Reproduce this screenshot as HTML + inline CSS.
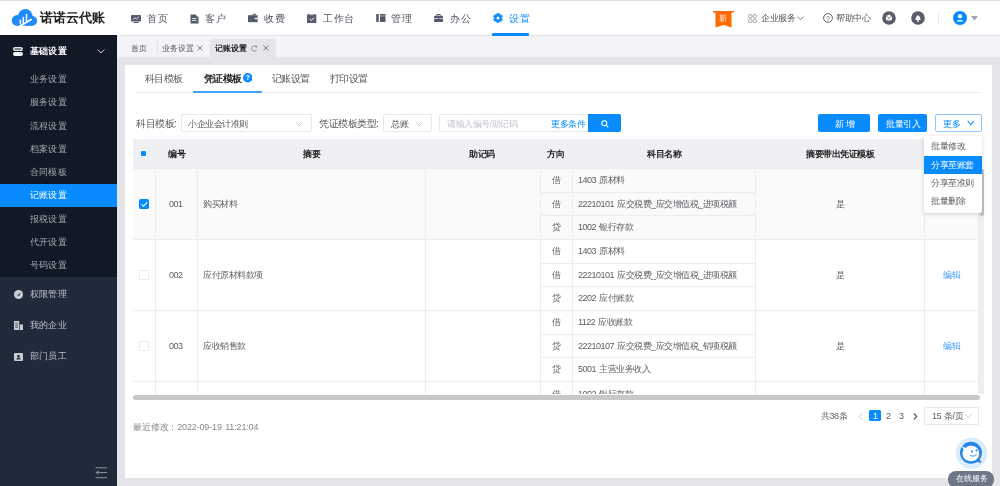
<!DOCTYPE html>
<html><head><meta charset="utf-8"><style>
*{box-sizing:border-box;margin:0;padding:0}
html,body{width:1000px;height:486px;overflow:hidden}
body{position:relative;background:#e4e5e9;font-family:"Liberation Sans",sans-serif;color:#333}
.a{position:absolute}
.t{position:absolute;will-change:transform;white-space:nowrap;line-height:20px;font-size:9px;letter-spacing:-0.5px;word-spacing:1px;color:#5f6166}
.nav{font-size:10px;letter-spacing:0.6px;color:#50545e}
.side{font-size:9px;letter-spacing:0.2px;color:#a4a8b0}
.tb{font-size:8px;letter-spacing:0;color:#555}
.ct{font-size:10px;letter-spacing:-0.7px;color:#555}
.lbl{font-size:10px;letter-spacing:-0.5px;color:#555}
.hd{font-weight:bold;color:#222}
.d{font-size:10px;letter-spacing:-0.9px}
.sel{position:absolute;border:1px solid #e6e8ec;border-radius:2px;background:#fff}
</style></head><body>
<div class="a" style="left:0px;top:0px;width:1000.00px;height:36.00px;background:#fff;border-top:1px solid #dedfe3;border-bottom:1px solid #e3e4e8"></div>
<svg class="a" style="left:11px;top:8px;" width="27" height="19" viewBox="0 0 27 19"><g fill="#1f8bfb"><circle cx="6.2" cy="12.4" r="5.4"/><circle cx="14.3" cy="8.4" r="7.3"/><circle cx="21.2" cy="12.9" r="4.9"/><rect x="6" y="12" width="15.5" height="5.8"/></g><g stroke="#fff" stroke-linecap="round" fill="none"><path d="M9.4 12.3 V15.8" stroke-width="1.5"/><path d="M12.3 9.6 V15.6" stroke-width="1.5"/><path d="M15.5 6.5 V12.8" stroke-width="1.5"/><path d="M8.2 18.6 L20.2 11.6" stroke-width="1.7"/></g></svg>
<div class="t " style="left:40px;top:7.50px;font-size:13px;letter-spacing:0;font-weight:bold;color:#222">诺诺云代账</div>
<svg class="a" style="left:130.5px;top:14.5px;" width="10" height="8" viewBox="0 0 10 8"><rect x="0" y="0" width="10" height="6.5" rx="0.8" fill="#555b6b"/><path d="M2 4.5 L4 2.8 L5.5 4 L8 1.8" stroke="#fff" stroke-width="0.8" fill="none"/><rect x="2.5" y="7" width="5" height="1" fill="#555b6b"/></svg>
<div class="t nav" style="left:147px;top:8.60px;">首页</div>
<svg class="a" style="left:190px;top:13.5px;" width="9" height="10" viewBox="0 0 9 10"><path d="M0.5 0.5 H5.5 L8.5 3.5 V9.5 H0.5 Z" fill="#555b6b"/><path d="M2 4.5 H6.5 M2 6.5 H6.5" stroke="#fff" stroke-width="0.8"/></svg>
<div class="t nav" style="left:205px;top:8.60px;">客户</div>
<svg class="a" style="left:248px;top:13.3px;" width="10" height="10" viewBox="0 0 10 10"><path d="M0 2.2 H9.6 V9.2 H0 Z" fill="#555b6b"/><path d="M3.6 2.2 L7 0.2 L8 2.2 Z" fill="#555b6b"/><rect x="6.6" y="4.9" width="3" height="1.3" fill="#fff"/></svg>
<div class="t nav" style="left:263.6px;top:8.60px;">收费</div>
<svg class="a" style="left:306.8px;top:13.8px;" width="10" height="10" viewBox="0 0 10 10"><rect x="0" y="0.3" width="9.3" height="8.8" rx="0.9" fill="#555b6b"/><rect x="2.6" y="0" width="4.1" height="1.4" fill="#a9adb8"/><path d="M2.6 4.8 L4.3 6.5 L7 3.6" stroke="#fff" stroke-width="1" fill="none"/></svg>
<div class="t nav" style="left:322.5px;top:8.60px;">工作台</div>
<svg class="a" style="left:375.5px;top:14px;" width="10" height="8" viewBox="0 0 10 8"><rect x="0.2" y="0" width="2.5" height="8" fill="#555b6b"/><rect x="4" y="0" width="5.5" height="8" fill="#555b6b"/><rect x="4" y="1.6" width="5.5" height="0.7" fill="#c5c8d0"/></svg>
<div class="t nav" style="left:391px;top:8.60px;">管理</div>
<svg class="a" style="left:434.3px;top:14.2px;" width="9" height="8" viewBox="0 0 9 8"><rect x="0" y="1.8" width="9" height="6.2" rx="0.8" fill="#555b6b"/><path d="M2.8 1.9 V0.5 H6.2 V1.9" stroke="#555b6b" stroke-width="1" fill="none"/><rect x="0" y="4.3" width="9" height="0.7" fill="#fff"/><rect x="3.8" y="3.8" width="1.4" height="1.6" fill="#555b6b"/></svg>
<div class="t nav" style="left:449.5px;top:8.60px;">办公</div>
<svg class="a" style="left:492.8px;top:12.9px;" width="10" height="10" viewBox="0 0 10 10"><path d="M3.70 0.48 L6.30 0.48 L6.60 2.23 L8.26 1.62 L9.56 3.86 L8.20 5.00 L9.56 6.14 L8.26 8.38 L6.60 7.77 L6.30 9.52 L3.70 9.52 L3.40 7.77 L1.74 8.38 L0.44 6.14 L1.80 5.00 L0.44 3.86 L1.74 1.62 L3.40 2.23 Z" fill="#078bff" stroke="#078bff" stroke-width="0.5" stroke-linejoin="round"/><circle cx="5" cy="5" r="1.5" fill="#fff"/></svg>
<div class="t nav" style="left:509px;top:8.60px;color:#078bff">设置</div>
<div class="a" style="left:492px;top:33.4px;width:37.30px;height:2.60px;background:#078bff;border-radius:1px"></div>
<svg class="a" style="left:713px;top:10.5px;" width="21" height="17" viewBox="0 0 21 17"><rect x="0" y="0" width="21" height="1.5" fill="#ff6a00"/><path d="M2.5 0 H18.5 V16.5 L10.5 14 L2.5 16.5 Z" fill="#ff6a00"/></svg>
<div class="t " style="left:719px;top:8.50px;font-size:8px;letter-spacing:0;color:#fff">新</div>
<svg class="a" style="left:748px;top:14px;" width="9" height="9" viewBox="0 0 9 9"><g fill="none" stroke="#8a8e9a" stroke-width="0.8"><circle cx="2.2" cy="2.2" r="1.8"/><circle cx="6.8" cy="2.2" r="1.8"/><circle cx="2.2" cy="6.8" r="1.8"/><circle cx="6.8" cy="6.8" r="1.8"/></g></svg>
<div class="t " style="left:760.7px;top:7.80px;color:#555">企业服务</div>
<svg class="a" style="left:797px;top:16px;" width="7" height="5" viewBox="0 0 7 5"><path d="M0.5 0.5 L3.5 3.8 L6.5 0.5" stroke="#777" stroke-width="0.9" fill="none"/></svg>
<svg class="a" style="left:822.6px;top:12.9px;" width="10" height="10" viewBox="0 0 10 10"><circle cx="5" cy="5" r="4.4" stroke="#555" stroke-width="0.9" fill="none"/><text x="5" y="7.6" font-size="7" text-anchor="middle" fill="#555" font-family="Liberation Sans">?</text></svg>
<div class="t " style="left:835.8px;top:7.80px;color:#555">帮助中心</div>
<svg class="a" style="left:881.5px;top:11px;" width="14" height="14" viewBox="0 0 14 14"><circle cx="7" cy="7" r="6.8" fill="#585c6c"/><path d="M7 3.6 L10 5.2 V8.6 L7 10.3 L4 8.6 V5.2 Z" fill="#fff"/><path d="M4 5.2 L7 6.9 L10 5.2 M7 6.9 V10.3" stroke="#585c6c" stroke-width="0.6" fill="none"/></svg>
<svg class="a" style="left:910.5px;top:11px;" width="14" height="14" viewBox="0 0 14 14"><circle cx="7" cy="7" r="6.8" fill="#585c6c"/><path d="M4.3 9 C4.8 8 4.6 5.2 7 4.2 C9.4 5.2 9.2 8 9.7 9 Z" fill="#fff"/><circle cx="7" cy="10" r="0.9" fill="#fff"/></svg>
<div class="a" style="left:938px;top:13px;width:1.00px;height:10.00px;background:#e5e5e5"></div>
<svg class="a" style="left:952.5px;top:10.8px;" width="14" height="14" viewBox="0 0 14 14"><circle cx="7" cy="7" r="7" fill="#078bff"/><circle cx="7" cy="5.2" r="2.1" fill="#fff"/><path d="M3.5 10.6 C3.8 8.4 10.2 8.4 10.5 10.6 Z" fill="#fff"/></svg>
<svg class="a" style="left:970.5px;top:15.5px;" width="7" height="5" viewBox="0 0 7 5"><path d="M0 0 H7 L3.5 4.5 Z" fill="#a0a4b0"/></svg>
<div class="a" style="left:0px;top:35px;width:117.00px;height:451.00px;background:#212a3a"></div>
<div class="a" style="left:0px;top:35px;width:117.00px;height:242.30px;background:#111826"></div>
<svg class="a" style="left:13.2px;top:46.8px;" width="10" height="9" viewBox="0 0 10 9"><rect x="0" y="0" width="9.9" height="3.9" rx="1.9" fill="#e8e9ec"/><rect x="1.6" y="1.4" width="6.7" height="1.1" rx="0.5" fill="#111826"/><rect x="0" y="4.9" width="9.9" height="4" rx="2" fill="#fff"/><circle cx="7.6" cy="6.9" r="0.6" fill="#9aa"/></svg>
<div class="t side" style="left:30.3px;top:41.40px;color:#fff;font-weight:bold">基础设置</div>
<svg class="a" style="left:97.2px;top:49px;" width="8" height="5" viewBox="0 0 8 5"><path d="M0.5 0.5 L4 4 L7.5 0.5" stroke="#c8cad0" stroke-width="1" fill="none"/></svg>
<div class="t side" style="left:30.3px;top:68.90px;">业务设置</div>
<div class="t side" style="left:30.3px;top:92.20px;">服务设置</div>
<div class="t side" style="left:30.3px;top:115.50px;">流程设置</div>
<div class="t side" style="left:30.3px;top:138.80px;">档案设置</div>
<div class="t side" style="left:30.3px;top:162.10px;">合同模板</div>
<div class="a" style="left:0px;top:183.5px;width:117.00px;height:23.20px;background:#078bff"></div>
<div class="t side" style="left:30.3px;top:185.40px;color:#fff">记账设置</div>
<div class="t side" style="left:30.3px;top:208.70px;">报税设置</div>
<div class="t side" style="left:30.3px;top:232.00px;">代开设置</div>
<div class="t side" style="left:30.3px;top:255.30px;">号码设置</div>
<svg class="a" style="left:14px;top:289.5px;" width="9" height="9" viewBox="0 0 9 9"><circle cx="4.5" cy="4.5" r="4.5" fill="#c9ccd3"/><path d="M3 6 L6.3 2.7 L5.5 5.5 Z" fill="#1f2838"/></svg>
<div class="t side" style="left:30.3px;top:283.50px;color:#c0c3ca">权限管理</div>
<svg class="a" style="left:14px;top:320.5px;" width="9" height="9" viewBox="0 0 9 9"><rect x="0" y="0" width="5.2" height="9" fill="#c9ccd3"/><rect x="5.8" y="3.5" width="3.2" height="5.5" fill="#c9ccd3"/><path d="M1.2 2.3 H4 M1.2 4.3 H4 M1.2 6.3 H4" stroke="#1f2838" stroke-width="0.7"/></svg>
<div class="t side" style="left:30.3px;top:315.00px;color:#c0c3ca">我的企业</div>
<svg class="a" style="left:14px;top:351.5px;" width="9" height="9" viewBox="0 0 9 9"><rect x="0" y="1" width="9" height="8" rx="1" fill="#c9ccd3"/><circle cx="4.5" cy="4.4" r="1.3" fill="#1f2838"/><rect x="2.5" y="6.2" width="4" height="1.3" fill="#1f2838"/></svg>
<div class="t side" style="left:30.3px;top:346.30px;color:#c0c3ca">部门员工</div>
<svg class="a" style="left:95px;top:465px;" width="13" height="14" viewBox="0 0 13 14"><path d="M0.6 2.8 H12 M4.2 7.5 H12 M0.6 12.7 H12" stroke="#8f939c" stroke-width="1"/><path d="M3.6 5.4 L0.4 7.5 L3.6 9.6 Z" fill="#8f939c"/></svg>
<div class="a" style="left:117px;top:36px;width:883.00px;height:21.00px;background:#f3f4f8"></div>
<div class="t tb" style="left:131.2px;top:39.00px;">首页</div>
<div class="a" style="left:156.5px;top:42px;width:1.00px;height:11.00px;background:#e2e3e7"></div>
<div class="t tb" style="left:162px;top:39.00px;">业务设置</div>
<svg class="a" style="left:197px;top:45px;" width="6" height="6" viewBox="0 0 6 6"><path d="M0.5 0.5 L5.5 5.5 M5.5 0.5 L0.5 5.5" stroke="#666" stroke-width="0.8"/></svg>
<div class="a" style="left:210px;top:39px;width:66.00px;height:18.00px;background:#e5e6ea;border-radius:2px 2px 0 0"></div>
<div class="t tb" style="left:215px;top:39.00px;color:#222;font-weight:bold">记账设置</div>
<svg class="a" style="left:250.8px;top:44.6px;" width="7" height="7" viewBox="0 0 7 7"><path d="M5.6 1.9 A2.7 2.7 0 1 0 5.6 5.1" stroke="#777" stroke-width="0.8" fill="none"/><path d="M5.9 0.6 L5.7 2.1 L4.3 1.9" stroke="#777" stroke-width="0.7" fill="none"/></svg>
<svg class="a" style="left:263px;top:45px;" width="6" height="6" viewBox="0 0 6 6"><path d="M0.5 0.5 L5.5 5.5 M5.5 0.5 L0.5 5.5" stroke="#666" stroke-width="0.8"/></svg>
<div class="a" style="left:125px;top:64.6px;width:867.00px;height:413.40px;background:#fff"></div>
<div class="t ct" style="left:145.3px;top:68.50px;">科目模板</div>
<div class="t ct" style="left:203.6px;top:68.50px;color:#222;font-weight:bold">凭证模板</div>
<svg class="a" style="left:242.6px;top:73px;" width="9.5" height="9.5" viewBox="0 0 10 10"><circle cx="5" cy="5" r="5" fill="#078bff"/><text x="5" y="7.8" font-size="7.5" font-weight="bold" text-anchor="middle" fill="#fff" font-family="Liberation Sans">?</text></svg>
<div class="t ct" style="left:272.3px;top:68.50px;">记账设置</div>
<div class="t ct" style="left:330px;top:68.50px;">打印设置</div>
<div class="a" style="left:135px;top:92px;width:847.00px;height:1.00px;background:#e8eaee"></div>
<div class="a" style="left:192.8px;top:90.8px;width:69.50px;height:2.10px;background:#3ea3f9"></div>
<div class="t lbl" style="left:135.6px;top:114.10px;">科目模板:</div>
<div class="sel" style="left:181px;top:114px;width:131px;height:18px"></div>
<div class="t " style="left:188.4px;top:113.80px;color:#555">小企业会计准则</div>
<svg class="a" style="left:296px;top:121.5px;" width="7" height="4" viewBox="0 0 7 4"><path d="M0.3 0.3 L3.5 3.5 L6.7 0.3" stroke="#b0b3b9" stroke-width="0.7" fill="none"/></svg>
<div class="t lbl" style="left:318.6px;top:114.10px;">凭证模板类型:</div>
<div class="sel" style="left:382.5px;top:114px;width:49px;height:18px"></div>
<div class="t " style="left:390.6px;top:113.80px;color:#555">总账</div>
<svg class="a" style="left:416px;top:121.5px;" width="7" height="4" viewBox="0 0 7 4"><path d="M0.3 0.3 L3.5 3.5 L6.7 0.3" stroke="#b0b3b9" stroke-width="0.7" fill="none"/></svg>
<div class="sel" style="left:439px;top:114px;width:150px;height:18px;border-radius:2px 0 0 2px"></div>
<div class="t " style="left:446.8px;top:113.80px;color:#c0c4cc">请输入编号/助记码</div>
<div class="t " style="left:550.8px;top:113.80px;color:#078bff">更多条件</div>
<div class="a" style="left:588px;top:114px;width:33.40px;height:18.10px;background:#078bff;border-radius:0 2px 2px 0"></div>
<svg class="a" style="left:601px;top:119.5px;" width="8" height="8" viewBox="0 0 8 8"><circle cx="3.3" cy="3.3" r="2.5" stroke="#fff" stroke-width="1.1" fill="none"/><path d="M5.2 5.2 L7.3 7.3" stroke="#fff" stroke-width="1.2"/></svg>
<div class="a" style="left:818px;top:114px;width:52.00px;height:18.00px;background:#078bff;border-radius:2px"></div>
<div class="t " style="left:834.5px;top:113.80px;color:#fff;word-spacing:0">新 增</div>
<div class="a" style="left:878px;top:114px;width:49.40px;height:18.00px;background:#078bff;border-radius:2px"></div>
<div class="t " style="left:886px;top:113.80px;color:#fff">批量引入</div>
<div class="a" style="left:935.3px;top:114px;width:46.70px;height:18.00px;border:1px solid #8ec8ff;border-radius:2px;background:#fff"></div>
<div class="t " style="left:943.2px;top:113.80px;color:#078bff">更多</div>
<svg class="a" style="left:967px;top:120.3px;" width="7.5" height="6" viewBox="0 0 7.5 6"><path d="M0.6 0.8 L3.75 4.6 L6.9 0.8" stroke="#2a95ff" stroke-width="1.1" fill="none"/></svg>
<div class="a" style="left:133px;top:139px;width:846.00px;height:29.50px;background:#eef0f3"></div>
<div class="a" style="left:133px;top:168.5px;width:846.00px;height:70.50px;background:#fafafa"></div>
<div class="a" style="left:133px;top:168px;width:846.00px;height:1.00px;background:#ebedf0"></div>
<div class="a" style="left:133px;top:238.6px;width:846.00px;height:1.00px;background:#ebedf0"></div>
<div class="a" style="left:133px;top:309.8px;width:846.00px;height:1.00px;background:#ebedf0"></div>
<div class="a" style="left:133px;top:381px;width:846.00px;height:1.00px;background:#ebedf0"></div>
<div class="a" style="left:540px;top:191.8px;width:215.00px;height:1.00px;background:#ebedf0"></div>
<div class="a" style="left:540px;top:214.9px;width:215.00px;height:1.00px;background:#ebedf0"></div>
<div class="a" style="left:540px;top:262.8px;width:215.00px;height:1.00px;background:#ebedf0"></div>
<div class="a" style="left:540px;top:286.1px;width:215.00px;height:1.00px;background:#ebedf0"></div>
<div class="a" style="left:540px;top:333.8px;width:215.00px;height:1.00px;background:#ebedf0"></div>
<div class="a" style="left:540px;top:357.2px;width:215.00px;height:1.00px;background:#ebedf0"></div>
<div class="a" style="left:155px;top:139px;width:1.00px;height:255.00px;background:#ebedf0"></div>
<div class="a" style="left:197px;top:139px;width:1.00px;height:255.00px;background:#ebedf0"></div>
<div class="a" style="left:425px;top:139px;width:1.00px;height:255.00px;background:#ebedf0"></div>
<div class="a" style="left:539.5px;top:139px;width:1.00px;height:255.00px;background:#ebedf0"></div>
<div class="a" style="left:572px;top:139px;width:1.00px;height:255.00px;background:#ebedf0"></div>
<div class="a" style="left:755px;top:139px;width:1.00px;height:255.00px;background:#ebedf0"></div>
<div class="a" style="left:924px;top:139px;width:1.00px;height:255.00px;background:#ebedf0"></div>
<div class="a" style="left:978.3px;top:139px;width:1.00px;height:255.00px;background:#ebedf0"></div>
<div class="a" style="left:979px;top:168.5px;width:4.50px;height:225.10px;background:#efefef"></div>
<div class="a" style="left:138.9px;top:148.3px;width:9.40px;height:9.90px;background:#fff;border:1px solid #e8eaed;border-radius:1px"></div>
<div class="a" style="left:141.1px;top:150.9px;width:5.20px;height:5.50px;background:#078bff;border-radius:0.5px"></div>
<div class="t hd" style="left:168px;top:143.80px;">编号</div>
<div class="t hd" style="left:303.3px;top:143.80px;">摘要</div>
<div class="t hd" style="left:469.3px;top:143.80px;">助记码</div>
<div class="t hd" style="left:547.3px;top:143.80px;">方向</div>
<div class="t hd" style="left:646.7px;top:143.80px;">科目名称</div>
<div class="t hd" style="left:805.7px;top:143.80px;">摘要带出凭证模板</div>
<div class="a" style="left:138.6px;top:198.8px;width:10.60px;height:10.40px;background:#078bff;border-radius:1.5px"></div>
<svg class="a" style="left:138.6px;top:198.8px;" width="10.6" height="10.4" viewBox="0 0 10 10"><path d="M2.5 5.2 L4.3 7 L7.8 3.2" stroke="#fff" stroke-width="1.1" fill="none"/></svg>
<div class="t " style="left:169px;top:193.70px;">001</div>
<div class="t " style="left:203px;top:193.70px;">购买材料</div>
<div class="t " style="left:552px;top:170.20px;">借</div>
<div class="t " style="left:578px;top:170.20px;">1403 原材料</div>
<div class="t " style="left:552px;top:193.60px;">借</div>
<div class="t " style="left:578px;top:193.60px;">22210101 应交税费_应交增值税_进项税额</div>
<div class="t " style="left:552px;top:217.00px;">贷</div>
<div class="t " style="left:578px;top:217.00px;">1002 银行存款</div>
<div class="t " style="left:835.5px;top:193.70px;">是</div>
<div class="a" style="left:138.6px;top:269.5px;width:10.00px;height:10.20px;background:#fff;border:1px solid #e8e9ec;border-radius:1.5px"></div>
<div class="t " style="left:169px;top:264.80px;">002</div>
<div class="t " style="left:203px;top:264.80px;">应付原材料款项</div>
<div class="t " style="left:552px;top:241.30px;">借</div>
<div class="t " style="left:578px;top:241.30px;">1403 原材料</div>
<div class="t " style="left:552px;top:264.70px;">借</div>
<div class="t " style="left:578px;top:264.70px;">22210101 应交税费_应交增值税_进项税额</div>
<div class="t " style="left:552px;top:288.10px;">贷</div>
<div class="t " style="left:578px;top:288.10px;">2202 应付账款</div>
<div class="t " style="left:835.5px;top:264.80px;">是</div>
<div class="t " style="left:942.6px;top:264.80px;color:#3d9bfd">编辑</div>
<div class="a" style="left:138.6px;top:340.59999999999997px;width:10.00px;height:10.20px;background:#fff;border:1px solid #e8e9ec;border-radius:1.5px"></div>
<div class="t " style="left:169px;top:335.90px;">003</div>
<div class="t " style="left:203px;top:335.90px;">应收销售款</div>
<div class="t " style="left:552px;top:312.40px;">借</div>
<div class="t " style="left:578px;top:312.40px;">1122 应收账款</div>
<div class="t " style="left:552px;top:335.80px;">贷</div>
<div class="t " style="left:578px;top:335.80px;">22210107 应交税费_应交增值税_销项税额</div>
<div class="t " style="left:552px;top:359.20px;">贷</div>
<div class="t " style="left:578px;top:359.20px;">5001 主营业务收入</div>
<div class="t " style="left:835.5px;top:335.90px;">是</div>
<div class="t " style="left:942.6px;top:335.90px;color:#3d9bfd">编辑</div>
<div class="a" style="left:133px;top:382px;width:846px;height:12px;overflow:hidden">
<div class="t " style="left:419px;top:1.70px;">借</div>
<div class="t " style="left:445px;top:1.70px;">1002 银行存款</div>
</div>
<div class="a" style="left:133px;top:394.6px;width:846.70px;height:5.40px;background:#c8c8c8;border-radius:3px"></div>
<div class="t " style="left:133px;top:416.50px;color:#888;letter-spacing:-0.15px">最近修改：2022-09-19 11:21:04</div>
<div class="t " style="left:821px;top:405.60px;">共38条</div>
<svg class="a" style="left:857.5px;top:412.8px;" width="5" height="7" viewBox="0 0 5 7"><path d="M4.2 0.5 L1.2 3.5 L4.2 6.5" stroke="#c0c4cc" stroke-width="1" fill="none"/></svg>
<div class="a" style="left:869px;top:410px;width:12.00px;height:11.00px;background:#078bff;border-radius:1.5px"></div>
<div class="t " style="left:873px;top:405.60px;color:#fff">1</div>
<div class="t " style="left:885.6px;top:405.60px;">2</div>
<div class="t " style="left:899px;top:405.60px;">3</div>
<svg class="a" style="left:912.6px;top:412.8px;" width="5" height="7" viewBox="0 0 5 7"><path d="M0.8 0.5 L3.8 3.5 L0.8 6.5" stroke="#555" stroke-width="1.1" fill="none"/></svg>
<div class="sel" style="left:924px;top:406.6px;width:55.4px;height:18px"></div>
<div class="t " style="left:932px;top:405.60px;">15 条/页</div>
<svg class="a" style="left:965px;top:414px;" width="7" height="4" viewBox="0 0 7 4"><path d="M0.3 0.3 L3.5 3.5 L6.7 0.3" stroke="#b0b3b9" stroke-width="0.7" fill="none"/></svg>
<div class="a" style="left:979.6px;top:169px;width:4.00px;height:46.50px;background:#c4c4c4;border-radius:2px"></div>
<div class="a" style="left:924.3px;top:136.2px;width:58.00px;height:77.10px;background:#fff;border-radius:2px;box-shadow:0 1px 4px rgba(0,0,0,0.18)"></div>
<div class="a" style="left:924.3px;top:155.7px;width:58.00px;height:18.10px;background:#078bff"></div>
<div class="t " style="left:931.3px;top:136.40px;">批量修改</div>
<div class="t " style="left:931.3px;top:155.00px;color:#fff">分享至账套</div>
<div class="t " style="left:931.3px;top:173.00px;">分享至准则</div>
<div class="t " style="left:931.3px;top:191.00px;">批量删除</div>
<svg class="a" style="left:955px;top:437px;" width="32" height="32" viewBox="0 0 32 32"><defs><radialGradient id="sg" cx="50%" cy="50%" r="50%"><stop offset="0.6" stop-color="#e9f4fe"/><stop offset="1" stop-color="#d2e8fc"/></radialGradient></defs><circle cx="16.5" cy="16.3" r="15.5" fill="url(#sg)"/><circle cx="16" cy="15.8" r="11" fill="#2b86ea"/><path d="M20 24.5 L26.5 26 L24 20 Z" fill="#2b86ea"/><path d="M6.5 9 L10.5 11 C12 9.3 14 8.7 16 8.7 C21 8.7 24.2 12.2 24.2 16.5 C24.2 21 20.6 24.2 16 24.2 C11 24.2 7.6 21 7.6 16.8 C7.6 15 8.2 13.6 8.8 12.6 Z" fill="#fff"/><ellipse cx="17" cy="14.5" rx="0.9" ry="1.2" fill="#2b86ea"/><ellipse cx="21.5" cy="13.4" rx="0.9" ry="1.2" fill="#2b86ea"/><path d="M14.8 18.4 Q18.2 20.6 21.6 17.6" stroke="#2b86ea" stroke-width="0.9" fill="none"/><circle cx="23.5" cy="19" r="1" fill="#f0b070"/></svg>
<div class="a" style="left:948.4px;top:471px;width:45.60px;height:17.00px;background:#6e7688;border-radius:8px"></div>
<div class="t " style="left:956px;top:469.00px;font-size:8px;letter-spacing:0;color:#fff">在线服务</div>
</body></html>
